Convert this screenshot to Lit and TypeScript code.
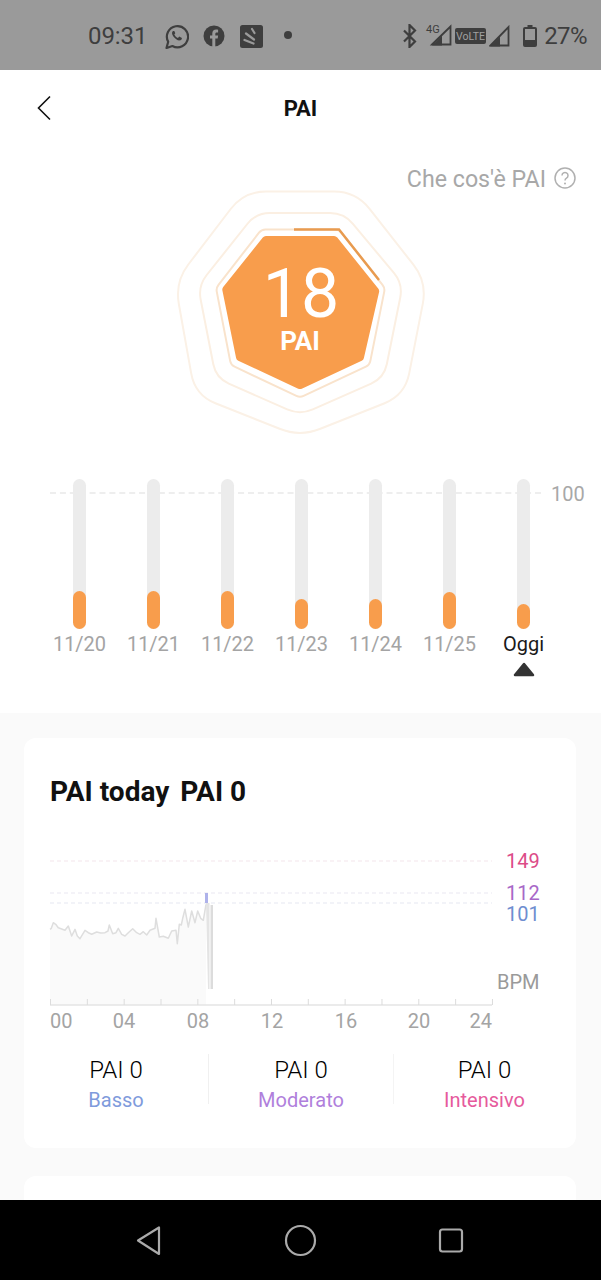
import { LitElement, html, css, svg } from "lit";
import { customElement } from "lit/decorators.js";

type P = [number, number];

function rounded(pts: P[], r: number): string {
  const n = pts.length;
  let d = "";
  for (let i = 0; i < n; i++) {
    const p = pts[i];
    const a = pts[(i - 1 + n) % n];
    const b = pts[(i + 1) % n];
    const la = Math.hypot(a[0] - p[0], a[1] - p[1]);
    const lb = Math.hypot(b[0] - p[0], b[1] - p[1]);
    const s: P = [p[0] + ((a[0] - p[0]) * r) / la, p[1] + ((a[1] - p[1]) * r) / la];
    const e: P = [p[0] + ((b[0] - p[0]) * r) / lb, p[1] + ((b[1] - p[1]) * r) / lb];
    d += `${i ? "L" : "M"}${s[0].toFixed(1)} ${s[1].toFixed(1)}Q${p[0]} ${p[1]} ${e[0].toFixed(1)} ${e[1].toFixed(1)}`;
  }
  return d + "Z";
}

const CORE: P[] = [[264, 76], [336, 76], [379.5, 130], [363.5, 200], [300, 229.5], [236.5, 200], [222, 128.5]];
const RING1: P[] = [[261.5, 69.5], [339, 69.5], [385, 128], [369.5, 205], [300, 237.5], [231, 205], [216, 128]];
const RING2: P[] = [[256, 53], [344, 53], [403, 124], [384, 218], [300, 255], [216, 218], [198, 126]];
const RING3: P[] = [[244, 31.5], [356, 31.5], [427, 122], [405, 235], [300, 277], [195, 235], [175, 122]];

const BARS = [
  { label: "11/20", fill: 38 },
  { label: "11/21", fill: 38 },
  { label: "11/22", fill: 38 },
  { label: "11/23", fill: 30 },
  { label: "11/24", fill: 30 },
  { label: "11/25", fill: 37 },
  { label: "Oggi", fill: 25, today: true },
];

const HR: P[] = [
  [30, 265], [34, 262], [40, 245], [47, 250], [55, 260], [65, 264], [75, 268], [85, 255], [95, 285], [105, 265], [112, 285], [120, 293],
  [135, 268], [145, 275], [155, 280], [170, 273], [182, 276], [195, 275], [204, 270], [208, 252], [218, 278], [228, 275], [235, 262], [245, 280],
  [255, 285], [265, 275], [278, 263], [290, 275], [300, 280], [310, 272], [320, 282], [330, 268], [345, 262], [348, 232], [358, 288], [370, 286],
  [385, 292], [395, 270], [408, 268], [412, 308], [418, 250], [424, 252], [428, 232], [435, 205], [445, 258], [455, 210], [465, 245], [473, 210],
  [482, 232], [490, 238], [498, 190],
];
const hrPts = HR.map(([x, y]) => `${(x / 3 - 10).toFixed(1)},${(y / 3 + 4).toFixed(1)}`).join(" ");

const AXIS = [
  { t: "00", x: 0, a: "start" },
  { t: "04", x: 74, a: "middle" },
  { t: "08", x: 148, a: "middle" },
  { t: "12", x: 222, a: "middle" },
  { t: "16", x: 296, a: "middle" },
  { t: "20", x: 369, a: "middle" },
  { t: "24", x: 442, a: "end" },
];

@customElement("app-root")
export class AppRoot extends LitElement {
  static styles = css`
    :host { display: block; width: 601px; height: 1280px; overflow: hidden; font-family: Roboto, "Liberation Sans", sans-serif; }
    .page { display: flex; flex-direction: column; height: 1280px; background: #fafafa; }
    .status { flex: none; height: 70px; background: #9a9a9a; color: #3e3e3e; display: flex; align-items: center; padding: 2px 0 0 88px; box-sizing: border-box; font-size: 24px; }
    .status svg { display: block; flex: none; }
    .time { width: 58px; letter-spacing: -0.1px; }
    .wa { margin-left: 19px; }
    .fb { margin-left: 14px; }
    .sq { margin-left: 15px; }
    .dot { margin-left: 21px; width: 8px; height: 8px; border-radius: 50%; background: #3e3e3e; margin-top: -2px; }
    .right { margin-left: auto; display: flex; align-items: center; padding-right: 14px; }
    .pct { margin-left: 7px; letter-spacing: -0.6px; }
    .g4 { margin-left: 2px; }
    .volte { margin-left: 2px; }
    .t2 { margin-left: 3px; }
    .batt { margin-left: 13px; }
    .main { flex: 1; min-height: 0; overflow: hidden; }
    .top { background: #fff; height: 643px; }
    .head { height: 77px; display: flex; align-items: center; justify-content: center; position: relative; font-size: 22px; font-weight: 700; color: #111; }
    .back { position: absolute; left: 36px; top: 25px; }
    .what { display: flex; justify-content: flex-end; align-items: center; gap: 8px; height: 24px; padding-right: 25px; margin-top: 19px; font-size: 23.2px; color: #a8a8a8; font-weight: 400; }
    .what span { padding-top: 2px; }
    .hero { display: block; width: 601px; height: 275px; }
    .num { font-size: 68px; font-weight: 400; fill: #fff; }
    .pai { font-size: 26px; font-weight: 700; fill: #fff; }
    .chart { position: relative; margin-top: 14px; padding-left: 42px; display: flex; }
    .dash { position: absolute; left: 50px; width: 491px; top: 13px; border-top: 2px dashed #eee; }
    .hundred { position: absolute; left: 551px; top: 3px; font-size: 20px; line-height: 24px; color: #a8a8a8; }
    .col { position: relative; width: 74px; display: flex; flex-direction: column; align-items: center; }
    .track { position: relative; width: 13px; height: 150px; border-radius: 7px; background: #ececec; display: flex; align-items: flex-end; }
    .fill { width: 100%; border-radius: 7px; background: #f89d4c; }
    .lbl { margin-top: 3px; padding-left: 1px; font-size: 20px; line-height: 24px; color: #a4a4a4; font-weight: 400; }
    .today { color: #1a1a1a; }
    .tri { margin-top: 6px; margin-left: 2px; display: block; }
    .card { margin: 25px 25px 0 24px; background: #fff; border-radius: 12px; }
    .c1 { height: 410px; padding: 38px 26px 0; box-sizing: border-box; }
    .c2 { margin-top: 28px; height: 60px; }
    .title { display: flex; gap: 11px; font-size: 28px; line-height: 32px; font-weight: 700; color: #111; white-space: pre; }
    .plot { display: block; margin-top: 29px; overflow: visible; }
    .ax { font-size: 20px; fill: #a4a4a4; font-weight: 400; }
    .r { font-size: 20px; font-weight: 400; }
    .foot { display: flex; margin: 30px -26px 0; }
    .cell { display: flex; flex-direction: column; align-items: center; height: 50px; box-sizing: border-box; }
    .cell.a { width: 185px; border-right: 1px solid #f0f0f0; }
    .cell.b { width: 185px; border-right: 1px solid #f4f4f4; }
    .cell.c { width: 181px; }
    .v { flex: none; font-size: 24px; line-height: 26px; font-weight: 300; color: #000; margin-top: 3px; }
    .k { flex: none; font-size: 20px; line-height: 24px; margin-top: 5px; font-weight: 400; }
    .basso { color: #7f9bdc; }
    .mod { color: #b07fdc; }
    .int { color: #e65a9c; }
    .nav { flex: none; height: 80px; background: #000; display: block; }
  `;

  render() {
    return html`<div class="page">
      <div class="status">
        <span class="time">09:31</span>
        <svg class="wa" width="24" height="25" viewBox="0 0 24 25">
          <path d="M1.5 24l1.7-6.2A10.6 10.6 0 1 1 7.4 22z" fill="none" stroke="#3e3e3e" stroke-width="2.2" stroke-linejoin="round"/>
          <path d="M8 7c-1.400 1-1.300 3 .4 5.500 2 2.800 4.800 4.500 7 3.800 1.200-.4 1.500-1.400 1.500-2.300l-2.700-1.400-1.200 1.300c-1.500-.5-3-2-3.700-3.500l1-1.200L9.300 7z" fill="#3e3e3e"/>
        </svg>
        <svg class="fb" width="22" height="22" viewBox="0 0 22 22">
          <circle cx="11" cy="11" r="10.500" fill="#3e3e3e"/>
          <path d="M9.300 22v-8.500H7v-3h2.300V8.500c0-2.600 1.500-4 3.800-4 .8 0 1.500.1 2 .2v2.700h-1.300c-1.200 0-1.500.6-1.500 1.500v1.600h2.800l-.4 3h-2.400V22z" fill="#9a9a9a"/>
        </svg>
        <svg class="sq" width="23" height="23" viewBox="0 0 23 23">
          <rect width="23" height="23" rx="2.500" fill="#3e3e3e"/>
          <path d="M12 4l2.500 4M6 8.500l8 6M4.500 15l9 3.500" stroke="#9a9a9a" stroke-width="2.200" stroke-linecap="round" fill="none"/>
        </svg>
        <span class="dot"></span>
        <div class="right">
          <svg width="15" height="24" viewBox="0 0 15 24">
            <path d="M2 6.500l11 11L7.500 23V1L13 6.500l-11 11" fill="none" stroke="#3e3e3e" stroke-width="2.200"/>
          </svg>
          <svg class="g4" width="34" height="24" viewBox="0 0 34 24">
            <text x="7" y="9" font-size="11" fill="#3e3e3e">4G</text>
            <path d="M13 20.500L31.500 2.500V20.500z" fill="none" stroke="#3e3e3e" stroke-width="1.800"/>
            <path d="M13 21.500L23 11.500V21.500z" fill="#3e3e3e"/>
          </svg>
          <svg class="volte" width="31" height="16" viewBox="0 0 31 16">
            <rect width="31" height="16" rx="2" fill="#3e3e3e"/>
            <text x="15.500" y="12" text-anchor="middle" font-size="10.500" fill="#a0a0a0">VoLTE</text>
          </svg>
          <svg class="t2" width="21" height="22" viewBox="0 0 21 22">
            <path d="M1.500 20.500L19.500 2V20.500z" fill="none" stroke="#3e3e3e" stroke-width="1.800"/>
            <path d="M1 21.500L11 11.500V21.500z" fill="#3e3e3e"/>
          </svg>
          <svg class="batt" width="14" height="22" viewBox="0 0 14 22">
            <path d="M4.500 0h5v2h2.500a2 2 0 0 1 2 2v16a2 2 0 0 1-2 2H2a2 2 0 0 1-2-2V4a2 2 0 0 1 2-2h2.500z" fill="#3e3e3e"/>
            <rect x="2" y="4" width="10" height="11" fill="#9a9a9a"/>
          </svg>
          <span class="pct">27%</span>
        </div>
      </div>

      <div class="main">
        <div class="top">
          <div class="head">
            <svg class="back" width="16" height="26" viewBox="0 0 16 26"><path d="M14 1.500L2.500 13 14 24.500" fill="none" stroke="#111" stroke-width="1.600"/></svg>
            PAI
          </div>
          <div class="what">
            <span>Che cos'è PAI</span>
            <svg width="22" height="22" viewBox="0 0 22 22">
              <circle cx="11" cy="11" r="10" fill="none" stroke="#b0b0b0" stroke-width="1.500"/>
              <path d="M8 8.500a3 3 0 1 1 4.500 2.600c-1 .6-1.500 1.100-1.500 2.400" fill="none" stroke="#b0b0b0" stroke-width="1.500"/>
              <circle cx="11" cy="16.500" r="1" fill="#b0b0b0"/>
            </svg>
          </div>
          ${this.renderHero()}
          <div class="chart">
            <div class="dash"></div>
            ${BARS.map(
              (b) => html`<div class="col">
                <div class="track"><div class="fill" style="height:${b.fill}px"></div></div>
                <span class="lbl ${b.today ? "today" : ""}">${b.label}</span>
                ${b.today
                  ? html`<svg class="tri" width="22" height="16" viewBox="0 0 22 16"><path d="M11 2L20 13H2z" fill="#333" stroke="#333" stroke-width="2.500" stroke-linejoin="round"/></svg>`
                  : ""}
              </div>`
            )}
            <span class="hundred">100</span>
          </div>
        </div>

        <div class="card c1">
          <div class="title"><span>PAI today</span><span>PAI 0</span></div>
          ${this.renderPlot()}
          <div class="foot">
            <div class="cell a"><span class="v">PAI 0</span><span class="k basso">Basso</span></div>
            <div class="cell b"><span class="v">PAI 0</span><span class="k mod">Moderato</span></div>
            <div class="cell c"><span class="v">PAI 0</span><span class="k int">Intensivo</span></div>
          </div>
        </div>
        <div class="card c2"></div>
      </div>

      <svg class="nav" width="601" height="80" viewBox="0 0 601 80">
        <path d="M159 27.500V54L138 40.500z" fill="none" stroke="#aaa" stroke-width="2.200" stroke-linejoin="round"/>
        <circle cx="300.500" cy="40.500" r="14.500" fill="none" stroke="#aaa" stroke-width="2.200"/>
        <rect x="440" y="29.500" width="22" height="22" rx="2.500" fill="none" stroke="#aaa" stroke-width="2.200"/>
      </svg>
    </div>`;
  }

  renderHero() {
    return html`<svg class="hero" viewBox="0 190 601 275">
      <g transform="translate(0 160)">
        <path d=${rounded(RING3, 22)} fill="none" stroke="#fbf1e6" stroke-width="2"/>
        <path d=${rounded(RING2, 14)} fill="none" stroke="#fbefe2" stroke-width="2"/>
        <path d=${rounded(RING1, 4)} fill="none" stroke="#f9e3cc" stroke-width="2"/>
        <path d="M294 69.500H339L379 120" fill="none" stroke="#e89b50" stroke-width="2.500"/>
        <path d=${rounded(CORE, 2)} fill="#f89d4c"/>
        <text class="num" x="301" y="157" text-anchor="middle">18</text>
        <text class="pai" x="300" y="190" text-anchor="middle">PAI</text>
      </g>
    </svg>`;
  }

  renderPlot() {
    const ticks = Array.from({ length: 13 }, (_, i) => i * 36.83);
    return html`<svg class="plot" width="500" height="187" viewBox="0 0 500 187">
      ${svg`
        <line x1="0" x2="442" y1="24" y2="24" stroke="#f7eef2" stroke-width="1.500" stroke-dasharray="4 3"/>
        <line x1="0" x2="442" y1="56" y2="56" stroke="#f1eff6" stroke-width="1.500" stroke-dasharray="4 3"/>
        <line x1="0" x2="442" y1="66" y2="66" stroke="#eef0f6" stroke-width="1.500" stroke-dasharray="4 3"/>
        <polygon points="0,168 ${hrPts} 156,168" fill="#fafafa"/>
        <polyline points=${hrPts} fill="none" stroke="#dedede" stroke-width="1.500" stroke-linejoin="round"/>
        <rect x="155" y="56" width="3" height="10" fill="#aeb2ea"/>
        <path d="M156 66L158 152H159.500L159.500 66z" fill="#e4e4e4"/>
        <path d="M160.500 68H163V152H160.500z" fill="#dcdcdc"/>
        <line x1="0" x2="442" y1="168" y2="168" stroke="#e4e4e4" stroke-width="1.500"/>
        ${ticks.map((x) => svg`<line x1=${x + 0.5} x2=${x + 0.5} y1="162" y2="168" stroke="#dcdcdc"/>`)}
        <text class="r" x="456" y="31" fill="#dc4c88">149</text>
        <text class="r" x="456" y="63" fill="#a868c8">112</text>
        <text class="r" x="456" y="84" fill="#6f8ed0">101</text>
        <text class="r" x="447" y="152" fill="#9a9a9a">BPM</text>
        ${AXIS.map((a) => svg`<text class="ax" x=${a.x} y="191" text-anchor=${a.a}>${a.t}</text>`)}
      `}
    </svg>`;
  }
}
